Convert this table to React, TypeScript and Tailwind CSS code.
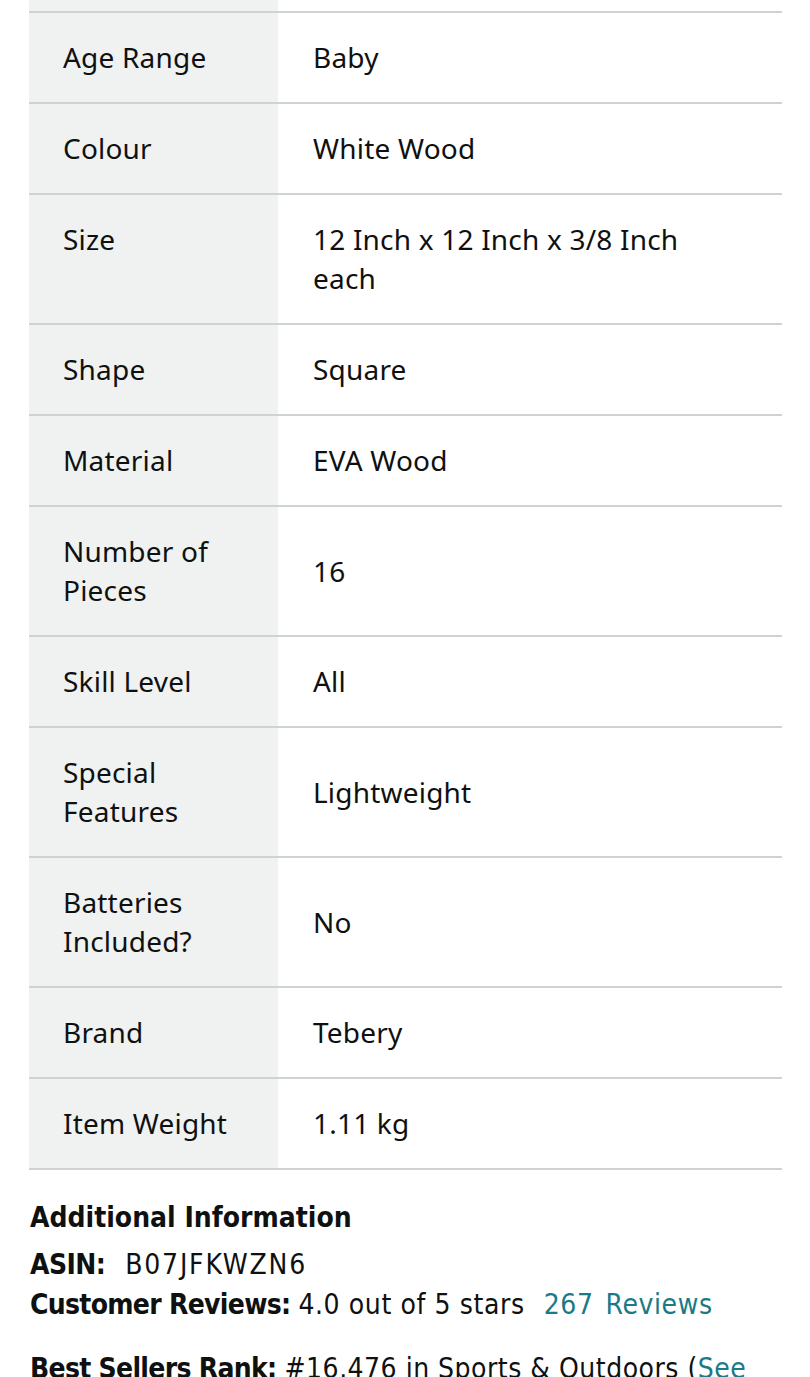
const rows: [string, string][] = [
  ['Age Range', 'Baby'],
  ['Colour', 'White Wood'],
  ['Size', '12 Inch x 12 Inch x 3/8 Inch each'],
  ['Shape', 'Square'],
  ['Material', 'EVA Wood'],
  ['Number of Pieces', '16'],
  ['Skill Level', 'All'],
  ['Special Features', 'Lightweight'],
  ['Batteries Included?', 'No'],
  ['Brand', 'Tebery'],
  ['Item Weight', '1.11 kg'],
]

export default function App() {
  return (
    <main className="h-[1377px] bg-white text-[#0f1111] overflow-hidden">
      {/* product details table, scrolled so only the tail of the previous row shows */}
      <div className="mx-[29px] w-[753px]">
        <div className="flex h-[13px] border-b-2 border-[#cfd2d2]">
          <div className="w-[249px] bg-[#f0f2f2]" />
          <div className="flex-1" />
        </div>
        {rows.map(([label, value]) => (
          <div
            key={label}
            className="flex border-b-2 border-[#cfd2d2] font-['Noto_Sans',sans-serif] text-[28px] leading-[39px] tracking-[0.2px]"
          >
            <div className="w-[249px] shrink-0 bg-[#f0f2f2] pl-[34px] pr-[30px] py-[25px]">
              {label}
            </div>
            <div className="flex-1 pl-[35px] pr-[50px] py-[25px] flex items-center">
              {value}
            </div>
          </div>
        ))}
      </div>

      {/* additional information */}
      <div className="pl-[30px] pr-[30px] pt-[28px] font-['Liberation_Sans_Narrow','DejaVu_Sans_Condensed',sans-serif] text-[28px] leading-[40px]">
        <h2 className="font-bold mb-[7px]">Additional Information</h2>
        <p>
          <span className="font-bold tracking-[-0.6px]">ASIN:</span>
          <span className="ml-[20px] tracking-[1.8px]">B07JFKWZN6</span>
        </p>
        <p>
          <span className="font-bold tracking-[-0.7px]">Customer Reviews:</span>{' '}
          <span className="tracking-[0.6px]">4.0 out of 5 stars</span>
          <span className="ml-[19px] text-[#1a7a87] tracking-[0.6px]">
            267<span className="ml-[12px]">Reviews</span>
          </span>
        </p>
        <p className="mt-[24px]">
          <span className="font-bold tracking-[-0.7px]">Best Sellers Rank:</span>{' '}
          <span className="tracking-[0.5px]">#16,476 in Sports &amp; Outdoors (</span>
          <span className="text-[#1a7a87] tracking-[0.5px]">See Top 100 in Sports &amp; Outdoors</span>)
        </p>
      </div>
    </main>
  )
}
